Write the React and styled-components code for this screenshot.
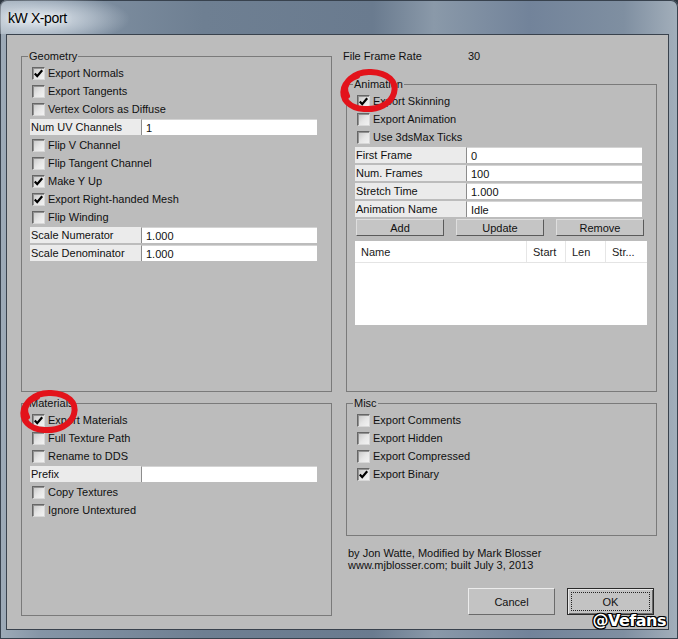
import React from "react";
import styled, { createGlobalStyle } from "styled-components";

const GlobalStyle = createGlobalStyle`
  html, body {
    margin: 0;
    padding: 0;
    background: #2e3741;
  }
  body {
    font-family: "Liberation Sans", Arial, sans-serif;
    font-size: 11px;
    color: #101010;
  }
`;

const Window = styled.div`
  position: relative;
  width: 678px;
  height: 639px;
  box-sizing: border-box;
  padding: 0 9px 9px 6px;
  display: flex;
  flex-direction: column;
  border-radius: 7px 7px 0 0;
  overflow: hidden;
  background: linear-gradient(
    to right,
    #9eabb8 0%,
    #8595a6 6%,
    #6e7f92 30%,
    #6a7b8f 55%,
    #8a99a9 64%,
    #72839a 78%,
    #7f8fa1 92%,
    #a3afbb 100%
  );
  box-shadow: inset 0 0 0 1px #38424e;
`;

const TitleBar = styled.div`
  height: 34px;
  margin: 0 -9px 0 -6px;
  padding-left: 8px;
  display: flex;
  align-items: center;
  background: radial-gradient(
    ellipse 90px 26px at 40px 19px,
    rgba(232, 238, 244, 0.95),
    rgba(220, 228, 236, 0.45) 60%,
    rgba(220, 228, 236, 0) 100%
  );
`;

const Title = styled.span`
  font-family: "Liberation Sans", Arial, sans-serif;
  font-size: 14px;
  letter-spacing: -0.4px;
  color: #000;
  text-shadow: 0 0 6px rgba(255, 255, 255, 0.9);
  margin-top: 2px;
`;

const Client = styled.div`
  flex: 1;
  background: #bcbcbc;
  border: 1px solid #39424d;
  display: grid;
  grid-template-columns: 311px 311px;
  column-gap: 14px;
  align-content: start;
  padding: 14px 0 0 14px;
`;

const Column = styled.div`
  display: flex;
  flex-direction: column;
`;

const Group = styled.fieldset`
  box-sizing: border-box;
  height: ${({ $h }) => $h}px;
  margin: 0 0 ${({ $gap }) => $gap || 0}px 0;
  padding: 1px 8px 0 8px;
  border: 1px solid #7a7a7a;
  min-width: 0;
`;

const Legend = styled.legend`
  font-size: 11px;
  line-height: 14px;
  padding: 0 1px;
  margin-left: -2px;
  color: #101010;
`;

const CheckRow = styled.div`
  height: 18px;
  display: flex;
  align-items: center;
  gap: 3px;
  padding-left: 2px;
  white-space: nowrap;
`;

const Box = styled.span`
  box-sizing: border-box;
  width: 13px;
  height: 13px;
  flex: none;
  display: flex;
  align-items: center;
  justify-content: center;
  border: 1px solid;
  border-color: #666 #d8d8d8 #d8d8d8 #666;
  box-shadow: inset 1px 1px 0 #929292;
  background: linear-gradient(135deg, #c6c6c6 0%, #e6e6e6 55%, #f2f2f2 100%);
`;

const CheckLabel = styled.span`
  line-height: 14px;
`;

const Check = ({ checked, children }) => (
  <CheckRow>
    <Box>
      {checked && (
        <svg width="11" height="11" viewBox="0 0 11 11">
          <path d="M1.8 5.6 L4.2 8.2 L9.2 2.2" fill="none" stroke="#000" strokeWidth="2.2" />
        </svg>
      )}
    </Box>
    <CheckLabel>{children}</CheckLabel>
  </CheckRow>
);

const FieldRow = styled.div`
  height: 18px;
  display: flex;
  align-items: center;
`;

const FieldLabel = styled.span`
  box-sizing: border-box;
  width: 111px;
  height: 16px;
  line-height: 16px;
  padding-left: 1px;
  background: #ebebeb;
  white-space: nowrap;
`;

const FieldValue = styled.span`
  box-sizing: border-box;
  width: 176px;
  height: 16px;
  line-height: 16px;
  padding-left: 4px;
  background: #fff;
  border-left: 1px solid #8c8c8c;
  border-top: 1px solid #d4d4d4;
`;

const Field = ({ label, value }) => (
  <FieldRow>
    <FieldLabel>{label}</FieldLabel>
    <FieldValue>{value}</FieldValue>
  </FieldRow>
);

const InfoRow = styled.div`
  height: 14px;
  line-height: 14px;
  margin: 0 0 14px -3px;
  display: flex;
`;

const InfoLabel = styled.span`
  width: 125px;
`;

const ButtonRow = styled.div`
  display: flex;
  gap: 12px;
  margin-top: 1px;
  padding-left: 1px;
`;

const ToolButton = styled.button`
  box-sizing: border-box;
  width: 88px;
  height: 17px;
  padding: 0;
  font-family: "Liberation Sans", Arial, sans-serif;
  font-size: 11px;
  color: #111;
  background: #c5c5c5;
  border: 1px solid;
  border-color: #dedede #5a5a5a #5a5a5a #dedede;
`;

const List = styled.div`
  width: 292px;
  height: 84px;
  margin-top: 5px;
  background: #fff;
`;

const ListHeader = styled.div`
  display: grid;
  grid-template-columns: 172px 39px 40px 41px;
  height: 22px;
  border-bottom: 1px solid #e4e4e4;
  box-sizing: border-box;
`;

const HeaderCell = styled.span`
  line-height: 22px;
  padding-left: 6px;
  border-right: ${({ $last }) => ($last ? "none" : "1px solid #e6e6e6")};
  color: #1a1a1a;
  white-space: nowrap;
  overflow: hidden;
`;

const Credits = styled.div`
  margin: 11px 0 0 2px;
  line-height: 12px;
`;

const DialogButtons = styled.div`
  display: flex;
  justify-content: flex-end;
  gap: 12px;
  margin-top: 17px;
  padding-right: 3px;
`;

const DialogButton = styled.button`
  position: relative;
  box-sizing: border-box;
  width: 87px;
  height: 27px;
  padding: 0;
  font-family: "Liberation Sans", Arial, sans-serif;
  font-size: 11px;
  color: #111;
  background: #c3c3c3;
  border: 1px solid;
  border-color: ${({ $default }) =>
    $default ? "#2a2a2a" : "#ececec #6a6a6a #6a6a6a #ececec"};
  box-shadow: ${({ $default }) =>
    $default ? "inset 1px 1px 0 #e8e8e8, inset -1px -1px 0 #6a6a6a" : "none"};

  &::after {
    content: "";
    display: ${({ $default }) => ($default ? "block" : "none")};
    position: absolute;
    inset: 3px;
    border: 1px dotted #222;
  }
`;

const Marker = styled.svg`
  position: absolute;
  left: ${({ $x }) => $x}px;
  top: ${({ $y }) => $y}px;
  pointer-events: none;
  overflow: visible;
`;

const Watermark = styled.div`
  position: absolute;
  right: 12px;
  bottom: 9px;
  font-family: "DejaVu Sans", sans-serif;
  font-weight: bold;
  font-size: 16px;
  line-height: 18px;
  letter-spacing: -0.5px;
  color: #fff;
  text-shadow: 1px 0 0 #000, -1px 0 0 #000, 0 1px 0 #000, 0 -1px 0 #000,
    1px 1px 0 #000, -1px -1px 0 #000, 1px -1px 0 #000, -1px 1px 0 #000;
`;

const RedLoop = ({ x, y }) => (
  <Marker $x={x} $y={y} width="62" height="44" viewBox="0 0 62 44">
    <path
      d="M9 28 C2 15, 17 3, 33 4 C50 5, 59 13, 56 25 C53 36, 40 42, 26 41 C11 40, 3 31, 6 20 C8 14, 13 10, 19 8"
      fill="none"
      stroke="#e3131b"
      strokeWidth="6"
      strokeLinecap="round"
    />
  </Marker>
);

export default function App() {
  return (
    <>
      <GlobalStyle />
      <Window>
        <TitleBar>
          <Title>kW X-port</Title>
        </TitleBar>
        <Client>
          <Column>
            <Group $h={343} $gap={4}>
              <Legend>Geometry</Legend>
              <Check checked>Export Normals</Check>
              <Check>Export Tangents</Check>
              <Check>Vertex Colors as Diffuse</Check>
              <Field label="Num UV Channels" value="1" />
              <Check>Flip V Channel</Check>
              <Check>Flip Tangent Channel</Check>
              <Check checked>Make Y Up</Check>
              <Check checked>Export Right-handed Mesh</Check>
              <Check>Flip Winding</Check>
              <Field label="Scale Numerator" value="1.000" />
              <Field label="Scale Denominator" value="1.000" />
            </Group>
            <Group $h={220}>
              <Legend>Materials</Legend>
              <Check checked>Export Materials</Check>
              <Check>Full Texture Path</Check>
              <Check>Rename to DDS</Check>
              <Field label="Prefix" value="" />
              <Check>Copy Textures</Check>
              <Check>Ignore Untextured</Check>
            </Group>
          </Column>
          <Column>
            <InfoRow>
              <InfoLabel>File Frame Rate</InfoLabel>
              <span>30</span>
            </InfoRow>
            <Group $h={315} $gap={4}>
              <Legend>Animation</Legend>
              <Check checked>Export Skinning</Check>
              <Check>Export Animation</Check>
              <Check>Use 3dsMax Ticks</Check>
              <Field label="First Frame" value="0" />
              <Field label="Num. Frames" value="100" />
              <Field label="Stretch Time" value="1.000" />
              <Field label="Animation Name" value="Idle" />
              <ButtonRow>
                <ToolButton>Add</ToolButton>
                <ToolButton>Update</ToolButton>
                <ToolButton>Remove</ToolButton>
              </ButtonRow>
              <List>
                <ListHeader>
                  <HeaderCell>Name</HeaderCell>
                  <HeaderCell>Start</HeaderCell>
                  <HeaderCell>Len</HeaderCell>
                  <HeaderCell $last>Str...</HeaderCell>
                </ListHeader>
              </List>
            </Group>
            <Group $h={140}>
              <Legend>Misc</Legend>
              <Check>Export Comments</Check>
              <Check>Export Hidden</Check>
              <Check>Export Compressed</Check>
              <Check checked>Export Binary</Check>
            </Group>
            <Credits>
              by Jon Watte, Modified by Mark Blosser
              <br />
              www.mjblosser.com; built July 3, 2013
            </Credits>
            <DialogButtons>
              <DialogButton>Cancel</DialogButton>
              <DialogButton $default>OK</DialogButton>
            </DialogButtons>
          </Column>
        </Client>
        <RedLoop x={338} y={68} />
        <RedLoop x={18} y={389} />
        <Watermark>@Vefans</Watermark>
      </Window>
    </>
  );
}
